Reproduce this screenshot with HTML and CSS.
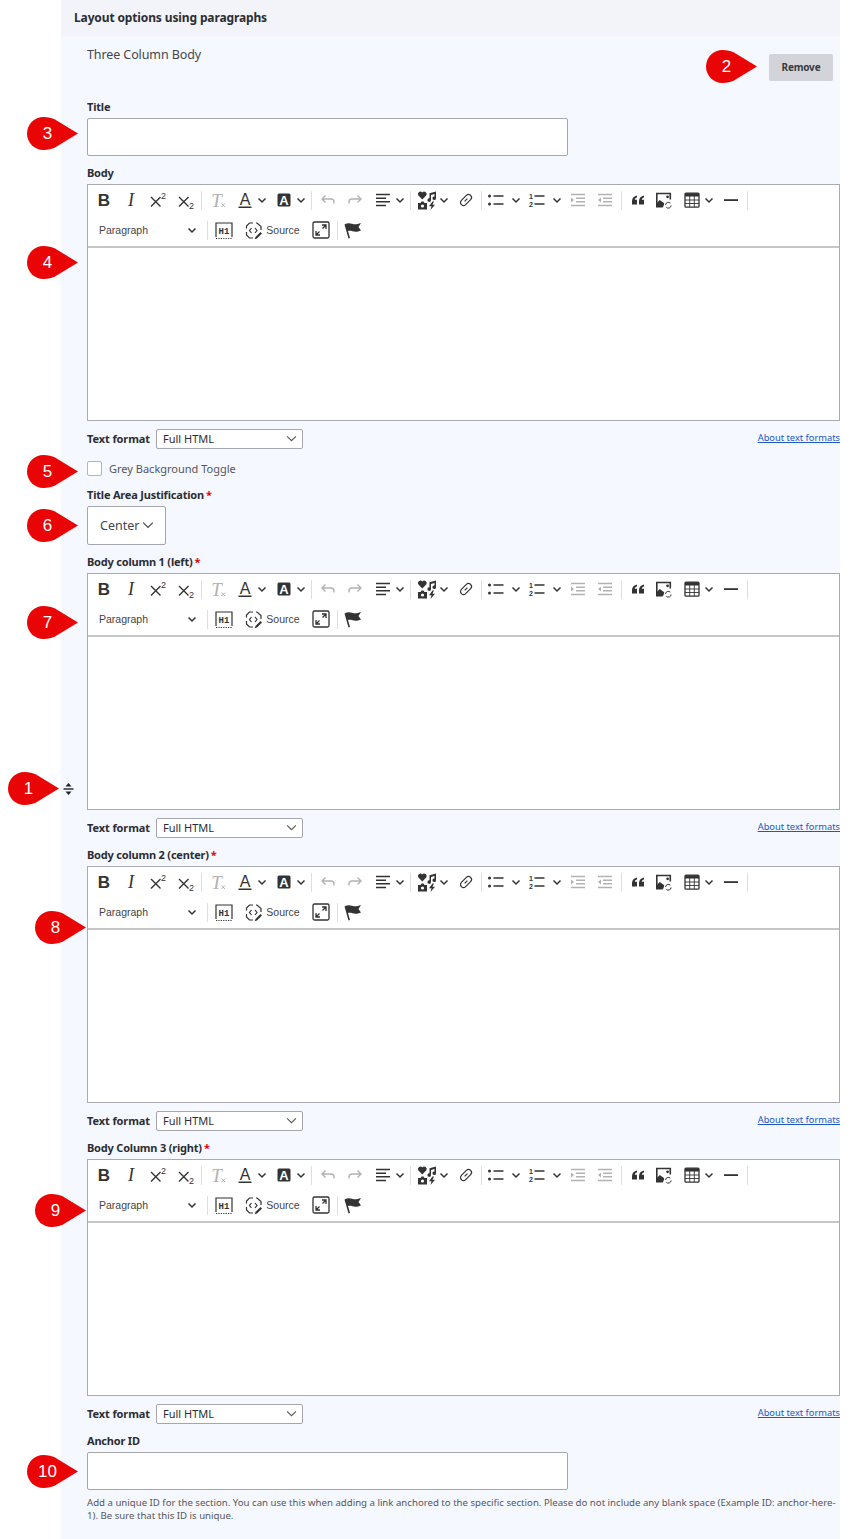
FILE: index.html
```html
<!DOCTYPE html>
<html lang="en">
<head>
    <meta charset="UTF-8">
    <meta name="viewport" content="width=device-width, initial-scale=1.0">
    <title>Layout options using paragraphs</title>
    <link rel="stylesheet" href="styles.css">
</head>
<body>
    <!-- Toolbar icons, shared by the four editors -->
    <svg class="icon-defs" aria-hidden="true">
        <symbol id="i-chev" viewBox="0 0 10 10"><path d="M1.5 3.5 5 7l3.5-3.5" fill="none" stroke="currentColor" stroke-width="1.5"/></symbol>
        <symbol id="i-chev-thin" viewBox="0 0 10 10"><path d="M1 3 5 7l4-4" fill="none" stroke="currentColor" stroke-width="1"/></symbol>
        <symbol id="i-bold" viewBox="0 0 20 20"><text x="10" y="16" text-anchor="middle" class="g-bold">B</text></symbol>
        <symbol id="i-italic" viewBox="0 0 20 20"><text x="10" y="16" text-anchor="middle" class="g-italic">I</text></symbol>
        <symbol id="i-sup" viewBox="0 0 20 20"><path d="M3 7l9.500 9.500m0-9.500L3 16.500" fill="none" stroke="currentColor" stroke-width="1.400"/><text x="13" y="8.500" class="g-small">2</text></symbol>
        <symbol id="i-sub" viewBox="0 0 20 20"><path d="M3 7l9.500 9.500m0-9.500L3 16.500" fill="none" stroke="currentColor" stroke-width="1.400"/><text x="13" y="18.500" class="g-small">2</text></symbol>
        <symbol id="i-clear" viewBox="0 0 20 20"><text x="8.500" y="16.500" text-anchor="middle" class="g-clear">T</text><path d="M13.500 13.500l3.500 3.500m0-3.500l-3.500 3.500" fill="none" stroke="currentColor" stroke-width="1"/></symbol>
        <symbol id="i-color" viewBox="0 0 20 20"><text x="10" y="15" text-anchor="middle" class="g-color">A</text><rect x="3.500" y="16.500" width="13" height="1.500" fill="currentColor"/></symbol>
        <symbol id="i-mark" viewBox="0 0 20 20"><rect x="3.500" y="3.500" width="13" height="13" rx="1.500" fill="currentColor"/><text x="10" y="14.800" text-anchor="middle" class="g-mark">A</text></symbol>
        <symbol id="i-undo" viewBox="0 0 20 20"><path d="M7.500 5.500 4 9l3.500 3.500M4 9h9a3 3 0 0 1 3 3v1.500" fill="none" stroke="currentColor" stroke-width="1.400"/></symbol>
        <symbol id="i-redo" viewBox="0 0 20 20"><path d="M12.500 5.500 16 9l-3.500 3.500M16 9H7a3 3 0 0 0-3 3v1.500" fill="none" stroke="currentColor" stroke-width="1.400"/></symbol>
        <symbol id="i-align" viewBox="0 0 20 20"><path d="M3 4.500h14M3 8.200h10M3 11.800h14M3 15.500h10" fill="none" stroke="currentColor" stroke-width="1.500"/></symbol>
        <symbol id="i-media" viewBox="0 0 20 20"><path d="M5.300 9.500 1.200 5.300a2.500 2.500 0 0 1 4.100-2.800 2.500 2.500 0 0 1 4.100 2.800z" fill="currentColor"/><path d="M12.500 3.300 19 1.500v6.700a1.800 1.800 0 1 1-1.500-1.700V4l-3.500 1v5a1.800 1.800 0 1 1-1.500-1.700z" fill="currentColor"/><path d="M1 13h2.500l1-1.500h2l1 1.500H10v6.500H1z" fill="currentColor"/><circle cx="5.500" cy="16" r="1.600" fill="#fff"/><path d="M15.500 11.500 12 16.200h2.500l-1 3.800 4.500-5.200h-2.600l1.600-3.300z" fill="currentColor"/></symbol>
        <symbol id="i-link" viewBox="0 0 20 20"><g transform="rotate(-45 10 10)" fill="none" stroke="currentColor" stroke-width="1.200"><rect x="3.500" y="7" width="13" height="6" rx="3"/><path d="M8 10h4"/></g></symbol>
        <symbol id="i-bullets" viewBox="0 0 20 20"><circle cx="3.500" cy="6" r="1.500" fill="currentColor"/><circle cx="3.500" cy="14" r="1.500" fill="currentColor"/><path d="M7.500 6h10M7.500 14h10" fill="none" stroke="currentColor" stroke-width="1.500"/></symbol>
        <symbol id="i-numbers" viewBox="0 0 20 20"><text x="2" y="8.500" class="g-tiny">1</text><text x="2" y="17" class="g-tiny">2</text><path d="M7.500 6h10M7.500 14h10" fill="none" stroke="currentColor" stroke-width="1.500"/></symbol>
        <symbol id="i-indent" viewBox="0 0 20 20"><path d="M3 4.500h14M8 8.200h9M8 11.800h9M3 15.500h14" fill="none" stroke="currentColor" stroke-width="1.500"/><path d="M3 7.500 6 10l-3 2.500z" fill="currentColor"/></symbol>
        <symbol id="i-outdent" viewBox="0 0 20 20"><path d="M3 4.500h14M8 8.200h9M8 11.800h9M3 15.500h14" fill="none" stroke="currentColor" stroke-width="1.500"/><path d="M6 7.500 3 10l3 2.500z" fill="currentColor"/></symbol>
        <symbol id="i-quote" viewBox="0 0 20 20"><path d="M9 5.500C6.200 6 4 8 4 11v3.500h5V9.700H6.800c0-1 1-1.800 2.200-2.100z" fill="currentColor"/><path d="M16 5.500C13.200 6 11 8 11 11v3.500h5V9.700h-2.200c0-1 1-1.800 2.200-2.100z" fill="currentColor"/></symbol>
        <symbol id="i-image" viewBox="0 0 20 20"><g transform="translate(-1.700 0)"><path d="M9.500 16.800H3.500V3.500h13.500v6" fill="none" stroke="currentColor" stroke-width="1.600"/><path d="M3.500 16.800v-3.800l3-3 2 1.500 2.500 1.800-1 3.500z" fill="currentColor"/><circle cx="14.300" cy="6.800" r="1.400" fill="currentColor"/><path d="M12.200 15a2.800 2.800 0 0 1 4.800-1.800m.8 2.300a2.800 2.800 0 0 1-4.800 1.800" fill="none" stroke="currentColor" stroke-width="1"/></g></symbol>
        <symbol id="i-table" viewBox="0 0 20 20"><rect x="3" y="3.200" width="14" height="14" rx="1" fill="none" stroke="currentColor" stroke-width="1.300"/><rect x="3" y="3.200" width="14" height="3.300" fill="currentColor"/><path d="M3 10h14M3 13.500h14M7.700 6v11M12.300 6v11" fill="none" stroke="currentColor" stroke-width=".9"/></symbol>
        <symbol id="i-hr" viewBox="0 0 20 20"><rect x="3" y="9.200" width="14" height="1.800" fill="currentColor"/></symbol>
        <symbol id="i-h1" viewBox="0 0 20 20"><path d="M2 17V3h16v14" fill="none" stroke="currentColor" stroke-width="1.200"/><path d="M2 18.500h16" fill="none" stroke="currentColor" stroke-width="1.200" stroke-dasharray="1.200 1.200"/><text x="10" y="14" text-anchor="middle" class="g-h1">H1</text></symbol>
        <symbol id="i-source" viewBox="0 0 20 20"><path d="M9 3H5.500L2.500 6v2.500M2.500 12v3l3 3h3.500M12 3h1l4 3.500V10" fill="none" stroke="currentColor" stroke-width="1.200"/><path d="M7.500 8 5.500 10.500l2 2.500M11 8l2 2.500-2 2.500" fill="none" stroke="currentColor" stroke-width="1.200"/><path d="M16.500 12l1.500 1.500-5 5-2.300.8.800-2.300z" fill="currentColor"/></symbol>
        <symbol id="i-expand" viewBox="0 0 20 20"><rect x="2" y="2" width="16" height="16" rx="1.500" fill="none" stroke="currentColor" stroke-width="1.300"/><path d="M11 5h4v4M15 5l-3.500 3.500M9 15H5v-4M5 15l3.500-3.500" fill="none" stroke="currentColor" stroke-width="1.300"/></symbol>
        <symbol id="i-flag" viewBox="0 0 20 20"><path d="M1.500 4.500C4 3 6.500 3 9 3.800c3 .9 5 .7 9-.8l-2.500 4 2.500 3.500c-3.500 1.500-6 1.500-8.500.8-2-.6-3.500-.6-4.500-.2L7 18l-1.500.4z" fill="currentColor"/></symbol>
        <symbol id="i-pin" viewBox="0 0 51 33"><path d="M16.500 0C21 0 25 1 28 2.500L51 16.500 28 30.500C25 32 21 33 16.500 33A16.500 16.500 0 0 1 16.500 0z"/></symbol>
    </svg>

    <div class="page">
        <main class="panel">
            <h1 class="panel-title">Layout options using paragraphs</h1>
            <div class="panel-body">
                <div class="type-row">
                    <span class="type-name">Three Column Body</span>
                    <button class="remove-btn" type="button">Remove</button>
                </div>

                <label class="field-label">Title</label>
                <input class="text-input" type="text">

                <label class="field-label">Body</label>
                <div class="editor">
                    <div class="toolbar">
                        <div class="tb-row">
                            <span class="btn"><svg><use href="#i-bold"/></svg></span>
                            <span class="btn"><svg><use href="#i-italic"/></svg></span>
                            <span class="btn"><svg><use href="#i-sup"/></svg></span>
                            <span class="btn"><svg><use href="#i-sub"/></svg></span>
                            <span class="sep"></span>
                            <span class="btn off"><svg><use href="#i-clear"/></svg></span>
                            <span class="btn drop"><svg><use href="#i-color"/></svg><svg class="chev"><use href="#i-chev"/></svg></span>
                            <span class="btn drop"><svg><use href="#i-mark"/></svg><svg class="chev"><use href="#i-chev"/></svg></span>
                            <span class="sep"></span>
                            <span class="btn off"><svg><use href="#i-undo"/></svg></span>
                            <span class="btn off"><svg><use href="#i-redo"/></svg></span>
                            <span class="btn drop"><svg><use href="#i-align"/></svg><svg class="chev"><use href="#i-chev"/></svg></span>
                            <span class="sep"></span>
                            <span class="btn drop"><svg><use href="#i-media"/></svg><svg class="chev"><use href="#i-chev"/></svg></span>
                            <span class="btn"><svg><use href="#i-link"/></svg></span>
                            <span class="sep sep-tight"></span>
                            <span class="btn drop wide"><svg><use href="#i-bullets"/></svg><svg class="chev"><use href="#i-chev"/></svg></span>
                            <span class="btn drop wide"><svg><use href="#i-numbers"/></svg><svg class="chev"><use href="#i-chev"/></svg></span>
                            <span class="btn off"><svg><use href="#i-indent"/></svg></span>
                            <span class="btn off"><svg><use href="#i-outdent"/></svg></span>
                            <span class="sep"></span>
                            <span class="btn"><svg><use href="#i-quote"/></svg></span>
                            <span class="btn"><svg><use href="#i-image"/></svg></span>
                            <span class="btn drop"><svg><use href="#i-table"/></svg><svg class="chev"><use href="#i-chev"/></svg></span>
                            <span class="btn"><svg><use href="#i-hr"/></svg></span>
                            <span class="sep"></span>
                        </div>
                        <div class="tb-row">
                            <span class="para-drop">Paragraph<svg class="chev"><use href="#i-chev"/></svg></span>
                            <span class="sep"></span>
                            <span class="btn"><svg><use href="#i-h1"/></svg></span>
                            <span class="source-btn"><svg><use href="#i-source"/></svg>Source</span>
                            <span class="btn"><svg><use href="#i-expand"/></svg></span>
                            <span class="sep"></span>
                            <span class="btn"><svg><use href="#i-flag"/></svg></span>
                        </div>
                    </div>
                    <div class="editable"></div>
                </div>
                <div class="format-row">
                    <label class="format-label">Text format</label>
                    <div class="format-select"><select><option>Full HTML</option></select><svg class="chev"><use href="#i-chev-thin"/></svg></div>
                    <a class="format-link" href="#">About text formats</a>
                </div>

                <label class="check-row"><input type="checkbox"> Grey Background Toggle</label>

                <label class="field-label">Title Area Justification<span class="req">*</span></label>
                <div class="just-select"><select><option>Center</option></select><svg class="chev"><use href="#i-chev-thin"/></svg></div>

                <label class="field-label">Body column 1 (left)<span class="req">*</span></label>
                <div class="editor">
                    <div class="toolbar">
                        <div class="tb-row">
                            <span class="btn"><svg><use href="#i-bold"/></svg></span>
                            <span class="btn"><svg><use href="#i-italic"/></svg></span>
                            <span class="btn"><svg><use href="#i-sup"/></svg></span>
                            <span class="btn"><svg><use href="#i-sub"/></svg></span>
                            <span class="sep"></span>
                            <span class="btn off"><svg><use href="#i-clear"/></svg></span>
                            <span class="btn drop"><svg><use href="#i-color"/></svg><svg class="chev"><use href="#i-chev"/></svg></span>
                            <span class="btn drop"><svg><use href="#i-mark"/></svg><svg class="chev"><use href="#i-chev"/></svg></span>
                            <span class="sep"></span>
                            <span class="btn off"><svg><use href="#i-undo"/></svg></span>
                            <span class="btn off"><svg><use href="#i-redo"/></svg></span>
                            <span class="btn drop"><svg><use href="#i-align"/></svg><svg class="chev"><use href="#i-chev"/></svg></span>
                            <span class="sep"></span>
                            <span class="btn drop"><svg><use href="#i-media"/></svg><svg class="chev"><use href="#i-chev"/></svg></span>
                            <span class="btn"><svg><use href="#i-link"/></svg></span>
                            <span class="sep sep-tight"></span>
                            <span class="btn drop wide"><svg><use href="#i-bullets"/></svg><svg class="chev"><use href="#i-chev"/></svg></span>
                            <span class="btn drop wide"><svg><use href="#i-numbers"/></svg><svg class="chev"><use href="#i-chev"/></svg></span>
                            <span class="btn off"><svg><use href="#i-indent"/></svg></span>
                            <span class="btn off"><svg><use href="#i-outdent"/></svg></span>
                            <span class="sep"></span>
                            <span class="btn"><svg><use href="#i-quote"/></svg></span>
                            <span class="btn"><svg><use href="#i-image"/></svg></span>
                            <span class="btn drop"><svg><use href="#i-table"/></svg><svg class="chev"><use href="#i-chev"/></svg></span>
                            <span class="btn"><svg><use href="#i-hr"/></svg></span>
                            <span class="sep"></span>
                        </div>
                        <div class="tb-row">
                            <span class="para-drop">Paragraph<svg class="chev"><use href="#i-chev"/></svg></span>
                            <span class="sep"></span>
                            <span class="btn"><svg><use href="#i-h1"/></svg></span>
                            <span class="source-btn"><svg><use href="#i-source"/></svg>Source</span>
                            <span class="btn"><svg><use href="#i-expand"/></svg></span>
                            <span class="sep"></span>
                            <span class="btn"><svg><use href="#i-flag"/></svg></span>
                        </div>
                    </div>
                    <div class="editable"></div>
                </div>
                <div class="format-row">
                    <label class="format-label">Text format</label>
                    <div class="format-select"><select><option>Full HTML</option></select><svg class="chev"><use href="#i-chev-thin"/></svg></div>
                    <a class="format-link" href="#">About text formats</a>
                </div>

                <label class="field-label">Body column 2 (center)<span class="req">*</span></label>
                <div class="editor">
                    <div class="toolbar">
                        <div class="tb-row">
                            <span class="btn"><svg><use href="#i-bold"/></svg></span>
                            <span class="btn"><svg><use href="#i-italic"/></svg></span>
                            <span class="btn"><svg><use href="#i-sup"/></svg></span>
                            <span class="btn"><svg><use href="#i-sub"/></svg></span>
                            <span class="sep"></span>
                            <span class="btn off"><svg><use href="#i-clear"/></svg></span>
                            <span class="btn drop"><svg><use href="#i-color"/></svg><svg class="chev"><use href="#i-chev"/></svg></span>
                            <span class="btn drop"><svg><use href="#i-mark"/></svg><svg class="chev"><use href="#i-chev"/></svg></span>
                            <span class="sep"></span>
                            <span class="btn off"><svg><use href="#i-undo"/></svg></span>
                            <span class="btn off"><svg><use href="#i-redo"/></svg></span>
                            <span class="btn drop"><svg><use href="#i-align"/></svg><svg class="chev"><use href="#i-chev"/></svg></span>
                            <span class="sep"></span>
                            <span class="btn drop"><svg><use href="#i-media"/></svg><svg class="chev"><use href="#i-chev"/></svg></span>
                            <span class="btn"><svg><use href="#i-link"/></svg></span>
                            <span class="sep sep-tight"></span>
                            <span class="btn drop wide"><svg><use href="#i-bullets"/></svg><svg class="chev"><use href="#i-chev"/></svg></span>
                            <span class="btn drop wide"><svg><use href="#i-numbers"/></svg><svg class="chev"><use href="#i-chev"/></svg></span>
                            <span class="btn off"><svg><use href="#i-indent"/></svg></span>
                            <span class="btn off"><svg><use href="#i-outdent"/></svg></span>
                            <span class="sep"></span>
                            <span class="btn"><svg><use href="#i-quote"/></svg></span>
                            <span class="btn"><svg><use href="#i-image"/></svg></span>
                            <span class="btn drop"><svg><use href="#i-table"/></svg><svg class="chev"><use href="#i-chev"/></svg></span>
                            <span class="btn"><svg><use href="#i-hr"/></svg></span>
                            <span class="sep"></span>
                        </div>
                        <div class="tb-row">
                            <span class="para-drop">Paragraph<svg class="chev"><use href="#i-chev"/></svg></span>
                            <span class="sep"></span>
                            <span class="btn"><svg><use href="#i-h1"/></svg></span>
                            <span class="source-btn"><svg><use href="#i-source"/></svg>Source</span>
                            <span class="btn"><svg><use href="#i-expand"/></svg></span>
                            <span class="sep"></span>
                            <span class="btn"><svg><use href="#i-flag"/></svg></span>
                        </div>
                    </div>
                    <div class="editable"></div>
                </div>
                <div class="format-row">
                    <label class="format-label">Text format</label>
                    <div class="format-select"><select><option>Full HTML</option></select><svg class="chev"><use href="#i-chev-thin"/></svg></div>
                    <a class="format-link" href="#">About text formats</a>
                </div>

                <label class="field-label">Body Column 3 (right)<span class="req">*</span></label>
                <div class="editor">
                    <div class="toolbar">
                        <div class="tb-row">
                            <span class="btn"><svg><use href="#i-bold"/></svg></span>
                            <span class="btn"><svg><use href="#i-italic"/></svg></span>
                            <span class="btn"><svg><use href="#i-sup"/></svg></span>
                            <span class="btn"><svg><use href="#i-sub"/></svg></span>
                            <span class="sep"></span>
                            <span class="btn off"><svg><use href="#i-clear"/></svg></span>
                            <span class="btn drop"><svg><use href="#i-color"/></svg><svg class="chev"><use href="#i-chev"/></svg></span>
                            <span class="btn drop"><svg><use href="#i-mark"/></svg><svg class="chev"><use href="#i-chev"/></svg></span>
                            <span class="sep"></span>
                            <span class="btn off"><svg><use href="#i-undo"/></svg></span>
                            <span class="btn off"><svg><use href="#i-redo"/></svg></span>
                            <span class="btn drop"><svg><use href="#i-align"/></svg><svg class="chev"><use href="#i-chev"/></svg></span>
                            <span class="sep"></span>
                            <span class="btn drop"><svg><use href="#i-media"/></svg><svg class="chev"><use href="#i-chev"/></svg></span>
                            <span class="btn"><svg><use href="#i-link"/></svg></span>
                            <span class="sep sep-tight"></span>
                            <span class="btn drop wide"><svg><use href="#i-bullets"/></svg><svg class="chev"><use href="#i-chev"/></svg></span>
                            <span class="btn drop wide"><svg><use href="#i-numbers"/></svg><svg class="chev"><use href="#i-chev"/></svg></span>
                            <span class="btn off"><svg><use href="#i-indent"/></svg></span>
                            <span class="btn off"><svg><use href="#i-outdent"/></svg></span>
                            <span class="sep"></span>
                            <span class="btn"><svg><use href="#i-quote"/></svg></span>
                            <span class="btn"><svg><use href="#i-image"/></svg></span>
                            <span class="btn drop"><svg><use href="#i-table"/></svg><svg class="chev"><use href="#i-chev"/></svg></span>
                            <span class="btn"><svg><use href="#i-hr"/></svg></span>
                            <span class="sep"></span>
                        </div>
                        <div class="tb-row">
                            <span class="para-drop">Paragraph<svg class="chev"><use href="#i-chev"/></svg></span>
                            <span class="sep"></span>
                            <span class="btn"><svg><use href="#i-h1"/></svg></span>
                            <span class="source-btn"><svg><use href="#i-source"/></svg>Source</span>
                            <span class="btn"><svg><use href="#i-expand"/></svg></span>
                            <span class="sep"></span>
                            <span class="btn"><svg><use href="#i-flag"/></svg></span>
                        </div>
                    </div>
                    <div class="editable"></div>
                </div>
                <div class="format-row">
                    <label class="format-label">Text format</label>
                    <div class="format-select"><select><option>Full HTML</option></select><svg class="chev"><use href="#i-chev-thin"/></svg></div>
                    <a class="format-link" href="#">About text formats</a>
                </div>

                <label class="field-label">Anchor ID</label>
                <input class="text-input" type="text">
                <p class="field-help">Add a unique ID for the section. You can use this when adding a link anchored to the specific section. Please do not include any blank space (Example ID: anchor-here-1). Be sure that this ID is unique.</p>
            </div>
        </main>

        <!-- Drag handle and numbered callouts lie over the form -->
        <svg class="drag-handle" viewBox="0 0 11 12"><path d="M5.500 0 8.500 3.500h-6zM5.500 12l-3-3.500h6z" fill="#222"/><rect x=".5" y="5.300" width="10" height="1.400" fill="#222"/></svg>
        <div class="pin pin-1"><svg><use href="#i-pin"/></svg><span>1</span></div>
        <div class="pin pin-2"><svg><use href="#i-pin"/></svg><span>2</span></div>
        <div class="pin pin-3"><svg><use href="#i-pin"/></svg><span>3</span></div>
        <div class="pin pin-4"><svg><use href="#i-pin"/></svg><span>4</span></div>
        <div class="pin pin-5"><svg><use href="#i-pin"/></svg><span>5</span></div>
        <div class="pin pin-6"><svg><use href="#i-pin"/></svg><span>6</span></div>
        <div class="pin pin-7"><svg><use href="#i-pin"/></svg><span>7</span></div>
        <div class="pin pin-8"><svg><use href="#i-pin"/></svg><span>8</span></div>
        <div class="pin pin-9"><svg><use href="#i-pin"/></svg><span>9</span></div>
        <div class="pin pin-10"><svg><use href="#i-pin"/></svg><span>10</span></div>
    </div>
</body>
</html>
```

FILE: styles.css
```css
body {
    font-family: "Noto Sans", sans-serif;
    margin: 0;
    padding: 0;
    background-color: #ffffff;
    color: #2c2d33;
}

.icon-defs {
    display: none;
}

.page {
    position: relative;
    height: 1539px;
    overflow: hidden;
}

.panel {
    width: 779px;
    height: 1539px;
    margin-left: 61px;
    background-color: #f5f8ff;
}

.panel-title {
    margin: 0;
    height: 36px;
    padding-left: 13px;
    background-color: #f2f4f9;
    font-size: 12px;
    font-weight: 700;
    letter-spacing: -0.13px;
    line-height: 35px;
}

.panel-body {
    padding-left: 26px;
}

/* Type name and remove button */
.type-row {
    display: flex;
    justify-content: space-between;
    align-items: flex-start;
    padding-top: 10px;
    height: 54px;
}

.type-name {
    font-size: 12.5px;
    letter-spacing: -0.1px;
    line-height: 18px;
    color: #45464d;
}

.remove-btn {
    width: 64px;
    height: 27px;
    margin-top: 8px;
    margin-right: 7px;
    padding: 0 0 2px;
    border: none;
    border-radius: 2px;
    background-color: #d3d4d9;
    color: #3a3b40;
    font-family: "Noto Sans", sans-serif;
    font-size: 10px;
    font-weight: 700;
    letter-spacing: -0.2px;
    cursor: pointer;
}

/* Form fields */
.field-label {
    display: block;
    margin-top: 10px;
    margin-bottom: 4px;
    font-size: 11px;
    font-weight: 700;
    letter-spacing: -0.2px;
    line-height: 14px;
}

.type-row + .field-label {
    margin-top: 0;
}

.req {
    margin-left: 2px;
    color: #e60000;
}

.text-input {
    display: block;
    box-sizing: border-box;
    width: 481px;
    height: 38px;
    border: 1px solid #a4a5ad;
    border-radius: 2px;
    background-color: #ffffff;
}

.check-row {
    display: flex;
    align-items: center;
    gap: 7px;
    height: 15px;
    margin-top: 12px;
    margin-bottom: 12px;
    font-size: 11px;
    color: #55565b;
}

.check-row input {
    appearance: none;
    box-sizing: border-box;
    width: 15px;
    height: 15px;
    margin: 0;
    border: 1px solid #b4b5bb;
    border-radius: 2px;
    background-color: #ffffff;
}

.just-select {
    position: relative;
    width: 79px;
    height: 39px;
}

.just-select select {
    appearance: none;
    display: block;
    box-sizing: border-box;
    width: 100%;
    height: 100%;
    padding-left: 12px;
    border: 1px solid #a4a5ad;
    border-radius: 2px;
    background-color: #ffffff;
    color: #45464d;
    font-family: "Noto Sans", sans-serif;
    font-size: 12.5px;
}

.just-select .chev {
    position: absolute;
    top: 13px;
    right: 12px;
    width: 12px;
    height: 12px;
    color: #45464d;
}

/* Rich text editor */
.editor {
    box-sizing: border-box;
    width: 753px;
    height: 237px;
    border: 1px solid #a9aab2;
    background-color: #ffffff;
}

.toolbar {
    height: 61px;
    padding-left: 2px;
    border-bottom: 2px solid #c6c6c6;
}

.tb-row {
    display: flex;
    align-items: center;
    height: 30px;
}

.btn {
    display: flex;
    flex: none;
    align-items: center;
    justify-content: center;
    width: 27.3px;
    height: 24px;
    color: #333333;
}

.btn svg {
    flex: none;
    width: 20px;
    height: 20px;
}

.btn.off {
    color: #b2b2b2;
}

.btn.drop {
    justify-content: flex-start;
    width: 39px;
    padding-left: 3.65px;
    box-sizing: border-box;
}

.btn.drop.wide {
    width: 41px;
}

.btn .chev,
.para-drop .chev {
    width: 10px;
    height: 10px;
    margin-left: 2px;
    color: #333333;
}

.btn.drop.wide .chev {
    margin-left: 4.5px;
}

.sep {
    flex: none;
    width: 1px;
    height: 19px;
    margin: 0 2px;
    background-color: #dedede;
}

.sep-tight {
    margin-right: 0;
}

.para-drop {
    display: flex;
    flex: none;
    box-sizing: border-box;
    align-items: center;
    justify-content: space-between;
    width: 115px;
    padding-left: 9px;
    padding-right: 8px;
    font-family: "Liberation Sans", sans-serif;
    font-size: 10.5px;
    color: #444444;
}

.source-btn {
    display: flex;
    flex: none;
    box-sizing: border-box;
    align-items: center;
    gap: 2px;
    width: 70px;
    padding-left: 7px;
    font-family: "Liberation Sans", sans-serif;
    font-size: 10.5px;
    color: #444444;
}

.source-btn svg {
    flex: none;
    width: 20px;
    height: 20px;
    color: #333333;
}

.g-bold {
    font: 700 17px "Liberation Sans", sans-serif;
    fill: currentColor;
}

.g-italic {
    font: italic 400 18px "Liberation Serif", serif;
    fill: currentColor;
}

.g-small {
    font: 400 9px "Liberation Sans", sans-serif;
    fill: currentColor;
}

.g-tiny {
    font: 700 7px "Liberation Sans", sans-serif;
    fill: currentColor;
}

.g-clear {
    font: italic 400 19px "Liberation Serif", serif;
    fill: currentColor;
}

.g-color {
    font: 400 16px "Liberation Sans", sans-serif;
    fill: currentColor;
}

.g-mark {
    font: 700 13px "Liberation Sans", sans-serif;
    fill: #ffffff;
}

.g-h1 {
    font: 700 9px "Liberation Mono", monospace;
    fill: currentColor;
}

.editable {
    height: 172px;
}

/* Text format row under each editor */
.format-row {
    display: flex;
    align-items: center;
    width: 753px;
    height: 20px;
    margin-top: 8px;
}

.format-label {
    width: 69px;
    margin-bottom: 2px;
    font-size: 11px;
    font-weight: 700;
    letter-spacing: -0.1px;
}

.format-select {
    position: relative;
    width: 147px;
    height: 20px;
}

.format-select select {
    appearance: none;
    display: block;
    box-sizing: border-box;
    width: 100%;
    height: 100%;
    padding: 0 0 2px 6px;
    border: 1px solid #a4a5ad;
    border-radius: 2px;
    background-color: #ffffff;
    color: #2c2d33;
    font-family: "Noto Sans", sans-serif;
    font-size: 11px;
}

.format-select .chev {
    position: absolute;
    top: 4px;
    right: 6px;
    width: 11px;
    height: 11px;
    color: #55565b;
}

.format-link {
    margin-left: auto;
    margin-bottom: 3px;
    font-size: 9.3px;
    color: #1c57c8;
}

.field-help {
    width: 753px;
    margin: 6px 0 0;
    font-size: 9.63px;
    line-height: 13px;
    color: #55565b;
}

/* Drag handle */
.drag-handle {
    position: absolute;
    left: 62.5px;
    top: 783px;
    width: 11px;
    height: 12px;
}

/* Numbered callouts */
.pin {
    position: absolute;
    width: 51px;
    height: 33px;
}

.pin svg {
    display: block;
    width: 51px;
    height: 33px;
    fill: #e90505;
}

.pin span {
    position: absolute;
    left: 0;
    top: 0;
    width: 41px;
    color: #ffffff;
    font-family: "Liberation Sans", sans-serif;
    font-size: 17px;
    line-height: 33px;
    text-align: center;
}

.pin-1 { left: 8px; top: 772px; }
.pin-2 { left: 706px; top: 50px; }
.pin-3 { left: 27px; top: 117px; }
.pin-4 { left: 27px; top: 246px; }
.pin-5 { left: 27px; top: 455px; }
.pin-6 { left: 27px; top: 509px; }
.pin-7 { left: 27px; top: 606px; }
.pin-8 { left: 35px; top: 911px; }
.pin-9 { left: 35px; top: 1194px; }
.pin-10 { left: 27px; top: 1455px; }
```
